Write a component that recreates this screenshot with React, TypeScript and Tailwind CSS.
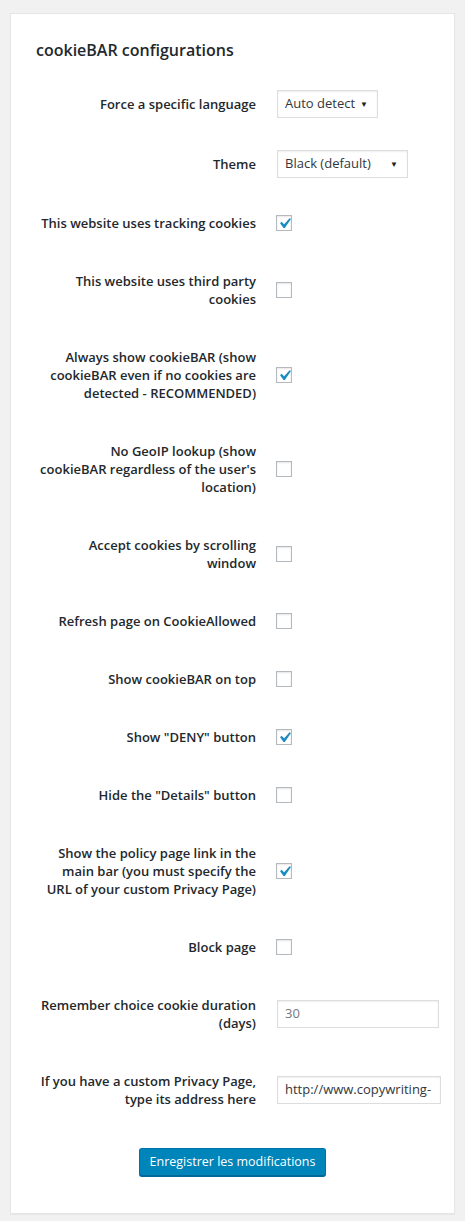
import type { ReactNode } from "react"

type Row = {
  label: string[]
  kind: "select" | "check" | "text"
  checked?: boolean
  value?: string
  width?: string
  muted?: boolean
}

const rows: Row[] = [
  { label: ["Force a specific language"], kind: "select", value: "Auto detect", width: "w-[101px]" },
  { label: ["Theme"], kind: "select", value: "Black (default)", width: "w-[131px]" },
  { label: ["This website uses tracking cookies"], kind: "check", checked: true },
  { label: ["This website uses third party", "cookies"], kind: "check" },
  { label: ["Always show cookieBAR (show", "cookieBAR even if no cookies are", "detected - RECOMMENDED)"], kind: "check", checked: true },
  { label: ["No GeoIP lookup (show", "cookieBAR regardless of the user's", "location)"], kind: "check" },
  { label: ["Accept cookies by scrolling", "window"], kind: "check" },
  { label: ["Refresh page on CookieAllowed"], kind: "check" },
  { label: ["Show cookieBAR on top"], kind: "check" },
  { label: ['Show "DENY" button'], kind: "check", checked: true },
  { label: ['Hide the "Details" button'], kind: "check" },
  { label: ["Show the policy page link in the", "main bar (you must specify the", "URL of your custom Privacy Page)"], kind: "check", checked: true },
  { label: ["Block page"], kind: "check" },
  { label: ["Remember choice cookie duration", "(days)"], kind: "text", value: "30", width: "w-[162px]", muted: true },
  { label: ["If you have a custom Privacy Page,", "type its address here"], kind: "text", value: "http://www.copywriting-", width: "w-[164px]" },
]

function Checkbox({ checked }: { checked?: boolean }) {
  return (
    <span className="flex h-4 w-4 items-center justify-center border border-[#b4b9be] bg-white shadow-[inset_0_1px_2px_rgba(0,0,0,0.1)]">
      {checked && (
        <svg width="21" height="21" viewBox="0 0 20 20" className="-mx-[3px] mt-[1px] shrink-0">
          <path d="M14.83 4.89l1.34.94-5.81 8.38H9.02L5.78 9.67l1.34-1.25 2.57 2.4z" fill="#1e8cbe" />
        </svg>
      )}
    </span>
  )
}

function Control({ row }: { row: Row }): ReactNode {
  if (row.kind === "check") return <Checkbox checked={row.checked} />
  if (row.kind === "select")
    return (
      <div className={`${row.width} ml-px flex h-[28px] items-center justify-between border border-[#ddd] bg-white pl-[7px] pr-[9px] text-[13px] text-[#32373c] shadow-[inset_0_1px_2px_rgba(0,0,0,0.07)]`}>
        <span>{row.value}</span>
        <span className="text-[8px] text-[#222]">▼</span>
      </div>
    )
  return (
    <div className={`${row.width} ml-px flex h-[28px] items-center overflow-hidden whitespace-nowrap border border-[#ddd] bg-white pl-[7px] text-[13px] shadow-[inset_0_1px_2px_rgba(0,0,0,0.07)] ${row.muted ? "text-[#72777c]" : "text-[#32373c]"}`}>
      {row.value}
    </div>
  )
}

export default function App() {
  return (
    <div className="min-h-[1221px] bg-[#f1f1f1] px-[10px] pt-[13px] font-['Open_Sans',sans-serif]">
      <div className="h-[1201px] border border-[#e5e5e5] bg-white pl-[25px] pt-[25px] shadow-[0_1px_1px_rgba(0,0,0,0.04)]">
        <h2 className="mb-[12px] text-[16px] leading-[23px] font-semibold text-[#23282d]">cookieBAR configurations</h2>

        <div className="flex flex-col">
          {rows.map((row, i) => (
            <div key={i} className={`flex items-center gap-[20px] ${row.kind === "select" ? "min-h-[60px]" : ""}`}>
              <div className="w-[220px] py-5 text-right text-[13px] leading-[18px] font-semibold text-[#23282d]">
                {row.label.map((l, j) => (
                  <div key={j} className="whitespace-nowrap">{l}</div>
                ))}
              </div>
              <Control row={row} />
            </div>
          ))}
        </div>

        <div className="mt-[20px] flex justify-center pr-[25px]">
          <button className="h-[28px] rounded-[3px] border border-[#0073aa] border-b-[#006799] bg-[#0085ba] px-[10px] text-[12.5px] text-white shadow-[0_1px_0_#006799]">
            Enregistrer les modifications
          </button>
        </div>
      </div>
    </div>
  )
}
